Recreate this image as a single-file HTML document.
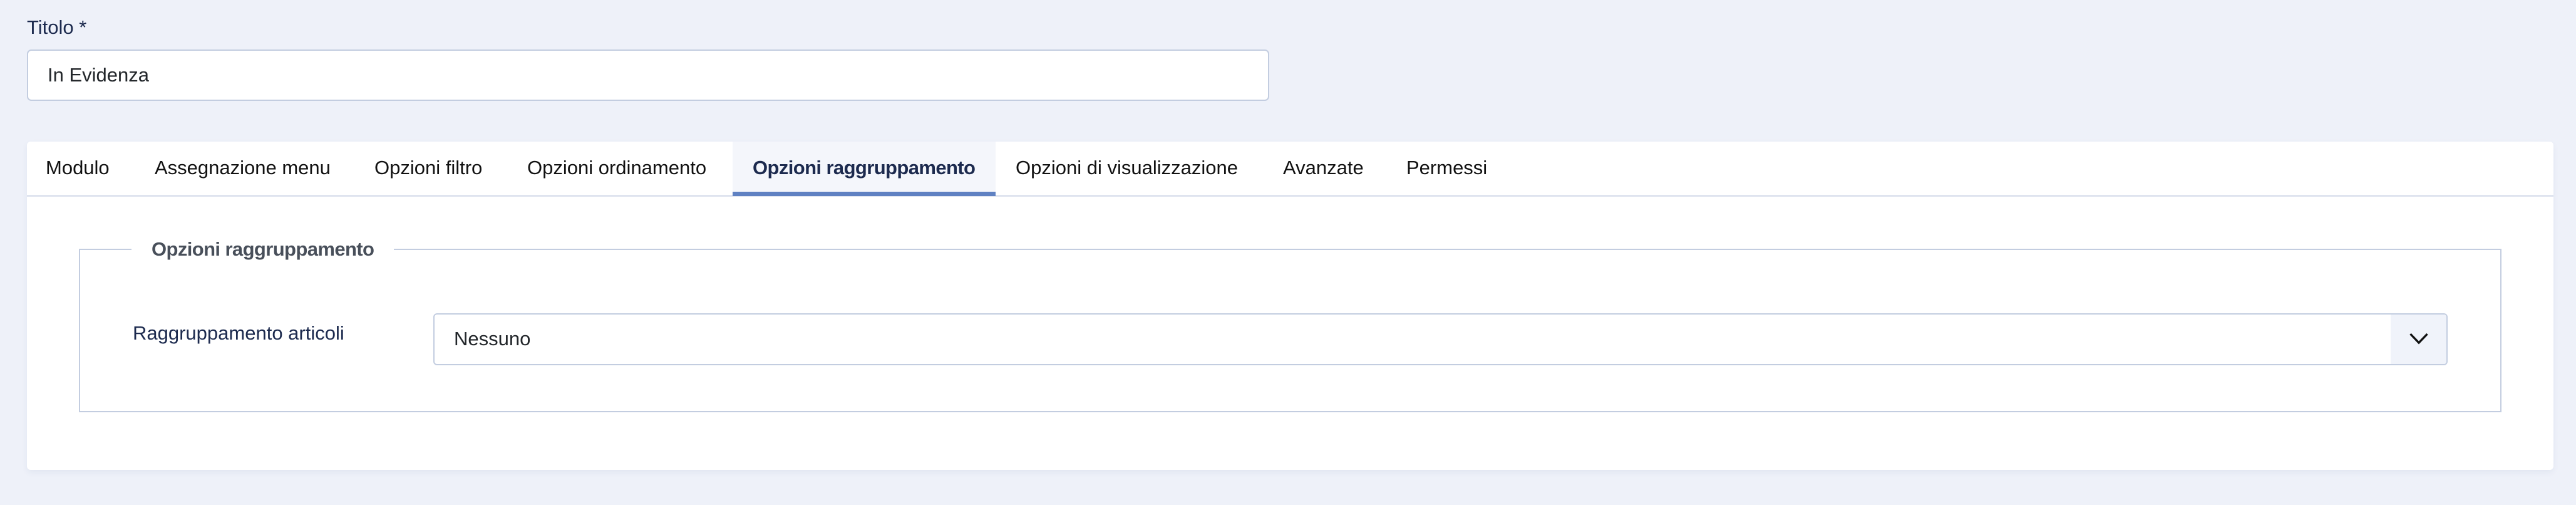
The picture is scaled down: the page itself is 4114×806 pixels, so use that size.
<!DOCTYPE html>
<html><head><meta charset="utf-8"><style>
*{margin:0;padding:0;box-sizing:border-box}
body{width:4114px;height:806px;background:#eef1f9;font-family:"Liberation Sans",sans-serif;position:relative;overflow:hidden;color:#22262a}
.a{position:absolute;white-space:nowrap}
.tab{position:absolute;top:250px;font-size:31px;line-height:36px;color:#111}
</style></head><body>
<div class="a" style="left:43px;top:26px;font-size:31px;line-height:36px;color:#1c2a4e">Titolo *</div>
<div class="a" style="left:43px;top:79px;width:1984px;height:82px;background:#fff;border:2px solid #c3cde0;border-radius:7px"></div>
<div class="a" style="left:76px;top:102px;font-size:31px;line-height:36px;color:#22262a">In Evidenza</div>

<div class="a" style="left:43px;top:226px;width:4035px;height:524px;background:#fff;border-radius:6px;box-shadow:0 4px 10px rgba(40,60,120,0.06)"></div>
<div class="a" style="left:43px;top:311px;width:4035px;height:3px;background:#dfe4ef"></div>
<div class="a" style="left:1170px;top:226px;width:420px;height:86px;background:#f4f6fb"></div>
<div class="a" style="left:1170px;top:306px;width:420px;height:7px;background:#5f81c2"></div>
<div class="tab" style="left:73px">Modulo</div>
<div class="tab" style="left:247px">Assegnazione menu</div>
<div class="tab" style="left:598px">Opzioni filtro</div>
<div class="tab" style="left:842px">Opzioni ordinamento</div>
<div class="tab" style="left:1202px;font-weight:bold;color:#1c2a4e;letter-spacing:-0.6px">Opzioni raggruppamento</div>
<div class="tab" style="left:1622px">Opzioni di visualizzazione</div>
<div class="tab" style="left:2049px">Avanzate</div>
<div class="tab" style="left:2246px">Permessi</div>

<div class="a" style="left:126px;top:397px;width:3869px;height:261px;border:2px solid #c3cde0"></div>
<div class="a" style="left:210px;top:380px;padding:0 32px;background:#fff;font-size:31px;line-height:36px;font-weight:bold;color:#484f5a;letter-spacing:-0.6px">Opzioni raggruppamento</div>
<div class="a" style="left:212px;top:514px;font-size:31px;line-height:36px;color:#1c2a4e">Raggruppamento articoli</div>
<div class="a" style="left:692px;top:500px;width:3217px;height:83px;background:#fff;border:2px solid #c3cde0;border-radius:6px;overflow:hidden">
  <div class="a" style="right:0;top:0;width:89px;height:100%;background:#f0f3fa"></div>
</div>
<div class="a" style="left:725px;top:523px;font-size:31px;line-height:36px;color:#22262a">Nessuno</div>
<svg class="a" style="left:3848px;top:486px" width="30" height="110" viewBox="0 0 30 110"><path d="M1.5 47 L15 61 L28.5 47" fill="none" stroke="#111" stroke-width="3.4"/></svg>
</body></html>
